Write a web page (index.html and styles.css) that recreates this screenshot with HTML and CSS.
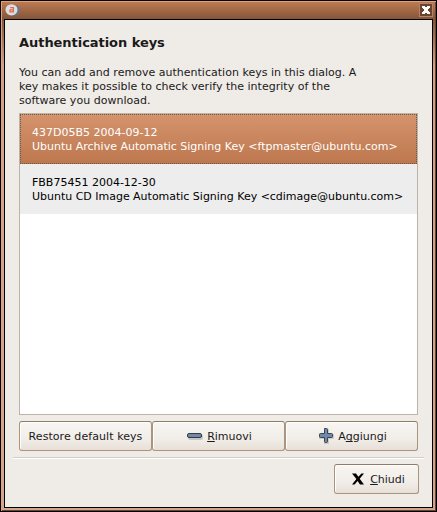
FILE: index.html
```html
<!DOCTYPE html>
<html lang="it">
<head>
<meta charset="utf-8">
<title>Authentication keys</title>
<link rel="stylesheet" href="styles.css">
</head>
<body>
<div class="window">
  <header class="titlebar">
    <svg class="app-icon" width="15" height="14" viewBox="0 0 15 14">
      <ellipse cx="8" cy="7" rx="6.500" ry="5.600" fill="#5f7899"/>
      <ellipse cx="6.500" cy="6.800" rx="6" ry="5.600" fill="#dcdde0"/>
      <path d="M5.200 4.600h3.200v4.200H5V6.800h3" fill="none" stroke="#e0694c" stroke-width="1.200"/>
    </svg>
    <button class="close" aria-label="Chiudi">
      <svg width="8" height="8" viewBox="0 0 8 8" shape-rendering="crispEdges"><path d="M0 0h3v1h2V0h3v2H7v1H6v2h1v1h1v2H5V7H3v1H0V6h1V5h1V3H1V2H0z" fill="#fff"/></svg>
    </button>
  </header>
  <main class="dialog">
    <h1 class="heading">Authentication keys</h1>
    <p class="intro">You can add and remove authentication keys in this dialog. A<br>key makes it possible to check verify the integrity of the<br>software you download.</p>
    <div class="list">
      <div class="row selected"><div>437D05B5 2004-09-12</div><div>Ubuntu Archive Automatic Signing Key &lt;ftpmaster@ubuntu.com&gt;</div></div>
      <div class="row"><div>FBB75451 2004-12-30</div><div class="snug">Ubuntu CD Image Automatic Signing Key &lt;cdimage@ubuntu.com&gt;</div></div>
    </div>
    <div class="actions">
      <button class="btn"><span class="wide">Restore default keys</span></button>
      <button class="btn with-icon">
        <svg class="icon" width="16" height="16" viewBox="0 0 16 16"><rect x="1" y="6" width="15" height="6" rx="2.5" fill="#000" opacity=".16"/><rect x=".5" y="5.500" width="14" height="4" rx="1.5" fill="#7189a8" stroke="#333c46"/></svg>
        <span><u>R</u>imuovi</span>
      </button>
      <button class="btn with-icon">
        <svg class="icon" width="16" height="16" viewBox="0 0 16 16"><path d="M6 1h5v5h5v5h-5v5H6v-5H1V6h5z" fill="#000" opacity=".14"/><path d="M6.500.5h2q1 0 1 1v4h4q1 0 1 1v2q0 1-1 1h-4v4q0 1-1 1h-1q-1 0-1-1v-4h-4q-1 0-1-1v-2q0-1 1-1h4v-4q0-1 1-1z" fill="#7189a8" stroke="#39434f"/></svg>
        <span>A<u>g</u>giungi</span>
      </button>
    </div>
    <div class="separator"></div>
    <footer class="footer">
      <button class="btn btn-close with-icon">
        <svg class="icon" width="16" height="16" viewBox="0 0 16 16"><path d="M2 2.500h4L8.400 5.800l3-3.300H14L9.700 7.700l4.300 5.800h-4L7.600 9.900l-3 3.600H2l4.400-5.600z" fill="#000"/></svg>
        <span><u>C</u>hiudi</span>
      </button>
    </footer>
  </main>
</div>
</body>
</html>
```
FILE: styles.css
```css
* { box-sizing: border-box; }
body {
  margin: 0;
  font: 11px/14px "DejaVu Sans", sans-serif;
  color: #1a1a1a;
}
.window {
  width: 437px;
  height: 512px;
  padding: 0 3px 3px;
  border: 1px solid #000;
  background: linear-gradient(#c07c52 0, #84553a 18px, #8d5e42 24px, #d2a188 65px, #d2a68e 100%);
  box-shadow: inset 1px 1px #e0a27b, inset -1px -1px #6c4430;
}
.titlebar {
  display: flex;
  justify-content: space-between;
  height: 18px;
  padding: 2px 0 0;
}
.app-icon { margin-left: 1px; }
.close {
  display: grid;
  place-items: center;
  width: 14px;
  height: 14px;
  padding: 0;
  border: 1px solid #b58467;
  background: #6b4430;
}
.dialog {
  height: 489px;
  padding: 15px 8px 0;
  border: 1px solid #000;
  background: #efebe6;
}
.heading {
  margin: 0 6px;
  font-size: 13px;
  letter-spacing: -0.05px;
  line-height: 16px;
}
.intro {
  margin: 15px 6px 5px;
  letter-spacing: 0.015px;
}
.list {
  height: 302px;
  margin: 0 6px;
  border: 1px solid #bdb3a6;
  background: #fff;
  color: #000;
}
.row {
  height: 50px;
  padding: 12px 12px 10px;
  background: #ededed;
  white-space: nowrap;
}
.snug { letter-spacing: -0.015px; }
.wide { letter-spacing: 0.07px; }
.selected {
  padding: 11px 11px 9px;
  border: 1px dotted #665a50;
  background: linear-gradient(#d5946d, #bd774e) border-box;
  color: #fff;
}
.actions {
  display: grid;
  grid-template-columns: repeat(3, 133px);
  margin: 6px 6px 0;
}
.btn {
  display: flex;
  align-items: center;
  justify-content: center;
  gap: 4px;
  height: 30px;
  padding: 0;
  border: 1px solid;
  border-color: #8f7b66 #ab937d #ab937d;
  border-radius: 3px;
  background: linear-gradient(#f8f5f2, #f1ede8 60%, #e8e0d8);
  box-shadow: inset 1px 1px #fff;
  color: #1a1a1a;
  font: inherit;
  white-space: nowrap;
}
.btn span { padding-top: 2px; }
.with-icon { padding-left: 2px; }
.icon { flex: none; }
.btn u { text-underline-offset: 1px; text-decoration-thickness: 1px; text-decoration-skip-ink: none; }
.separator {
  height: 2px;
  margin-top: 6px;
  border-top: 1px solid #d6cec4;
  background: #fff;
}
.footer {
  display: flex;
  justify-content: flex-end;
  padding: 5px 5px 0;
}
.btn-close { width: 85px; }
```
